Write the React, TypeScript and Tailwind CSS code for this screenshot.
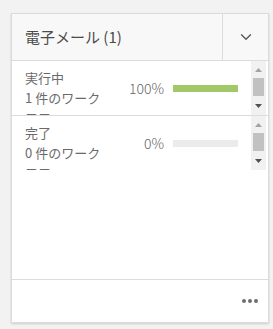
import { ChevronDown } from "lucide-react";

const rows = [
  { label: "実行中", count: "1 件のワークフロー", pct: 100 },
  { label: "完了", count: "0 件のワークフロー", pct: 0 },
];

// mimics the classic browser scrollbar seen in the screenshot
function FakeScrollbar() {
  return (
    <div className="mr-[2px] flex w-[15px] shrink-0 flex-col items-center bg-[#f1f1f1]">
      <div className="flex h-[17px] w-full items-center justify-center">
        <svg width="7" height="4" viewBox="0 0 7 4">
          <path d="M0 4 L3.5 0 L7 4 Z" fill="#a3a3a3" />
        </svg>
      </div>
      <div className="h-[18px] w-[11px] bg-[#c1c1c1]" />
      <div className="flex h-[19px] w-full items-center justify-center">
        <svg width="7" height="4" viewBox="0 0 7 4">
          <path d="M0 0 L7 0 L3.5 4 Z" fill="#505050" />
        </svg>
      </div>
    </div>
  );
}

export default function App() {
  return (
    <div
      className="h-[329px] w-[273px] bg-[#f2f2f2] pl-[11px] pt-[13px]"
      style={{ fontFamily: '"Noto Sans CJK JP", sans-serif' }}
    >
      <div className="flex h-[310px] w-[258px] flex-col border border-[#dcdcdc] bg-white shadow-[0_1px_2px_rgba(0,0,0,0.15)]">
        {/* Header */}
        <div className="flex h-[47px] shrink-0 border-b border-[#dcdcdc] bg-[#f8f8f8]">
          <div className="flex flex-1 items-center pl-[13px] text-[15px] text-[#4b4b4b]">
            電子メール (1)
          </div>
          <div className="flex w-[46px] items-center justify-center border-l border-[#dcdcdc]">
            <ChevronDown className="h-[18px] w-[18px] text-[#555]" strokeWidth={1.75} />
          </div>
        </div>

        {/* Rows */}
        {rows.map((row, i) => (
          <div
            key={row.label}
            className={
              "flex shrink-0 overflow-hidden " +
              (i === 0 ? "h-[55px] border-b border-[#dcdcdc]" : "h-[54px]")
            }
          >
            <div className="flex flex-1">
              <div className="w-[100px] shrink-0 pl-[13px] pt-[7px] text-[13px] leading-[20px] text-[#6a6a6a]">
                <div className="w-[84px]">{row.label}</div>
                <div className="w-[84px]">{row.count}</div>
              </div>
              <div className="flex h-[54px] flex-1 items-center">
                <div className="w-[52px] text-right text-[14px] font-light text-[#666]">
                  {row.pct}%
                </div>
                <div className="ml-[9px] h-[7px] w-[65px] bg-[#ebebeb]">
                  <div className="h-full bg-[#a2c86a]" style={{ width: `${row.pct}%` }} />
                </div>
              </div>
            </div>
            <FakeScrollbar />
          </div>
        ))}

        <div className="flex-1" />

        {/* Footer */}
        <div className="flex h-[43px] shrink-0 items-center justify-end border-t border-[#dcdcdc] pr-[10px]">
          <div className="flex gap-[2px]">
            <span className="h-[4px] w-[4px] rounded-full bg-[#6e6e6e]" />
            <span className="h-[4px] w-[4px] rounded-full bg-[#6e6e6e]" />
            <span className="h-[4px] w-[4px] rounded-full bg-[#6e6e6e]" />
          </div>
        </div>
      </div>
    </div>
  );
}
